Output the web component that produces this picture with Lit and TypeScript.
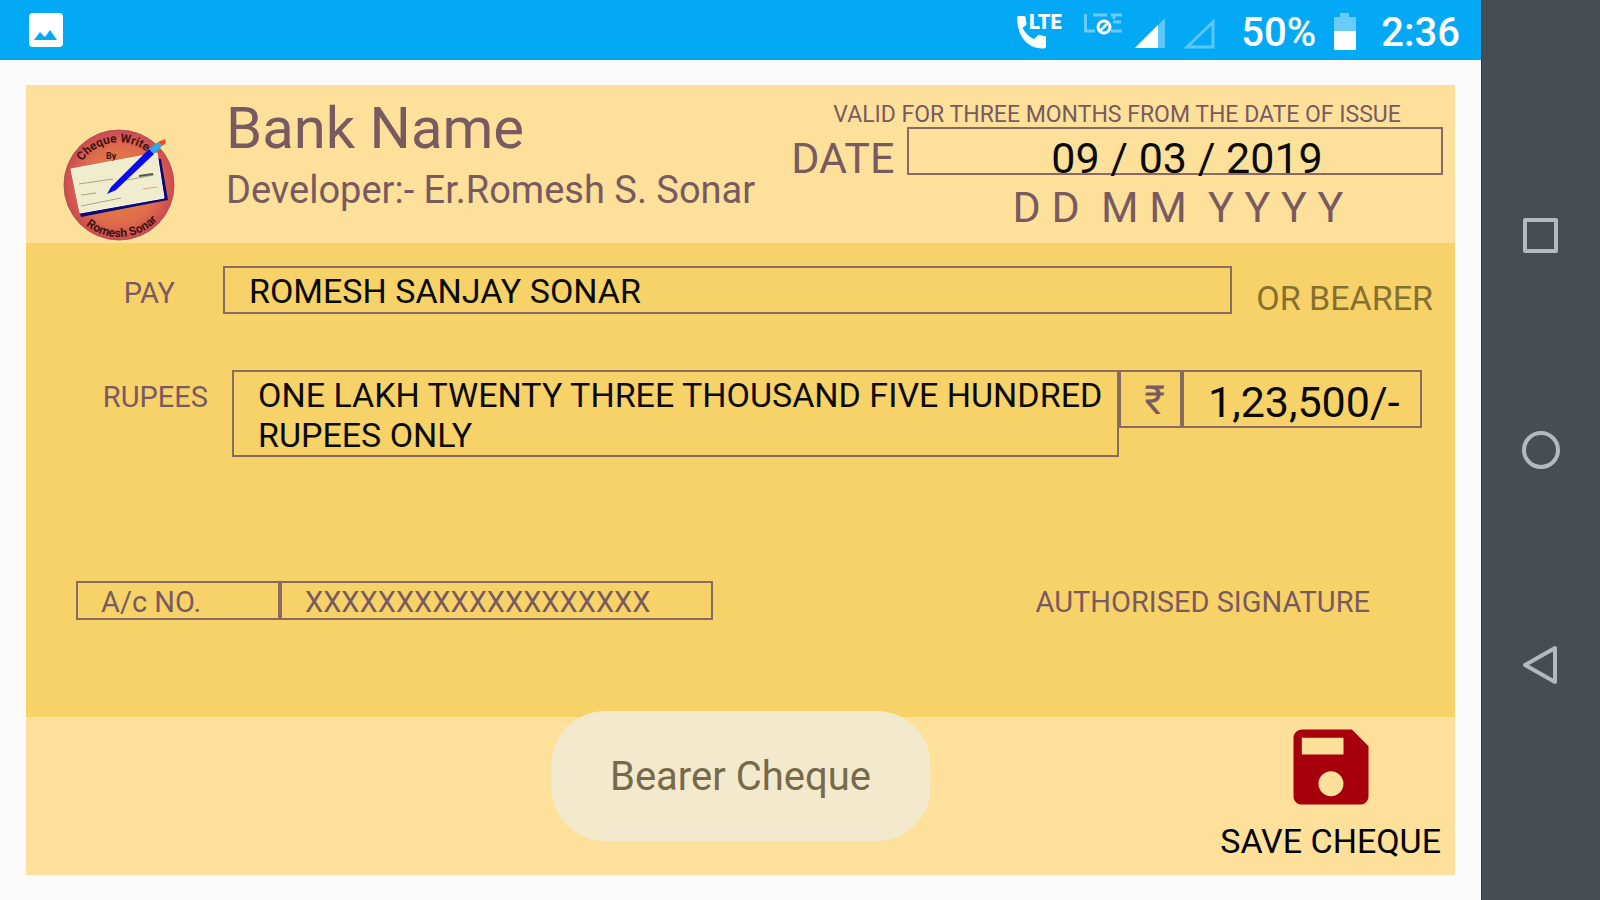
import { LitElement, html, css } from "lit";
import { customElement, property } from "lit/decorators.js";

@customElement("status-bar")
class StatusBar extends LitElement {
  static styles = css`
    :host {
      display: flex;
      align-items: center;
      height: 60px;
      padding: 0 21px 0 28px;
      background: #03a9f4;
      color: #fff;
      font: 500 40px/56px Roboto, sans-serif;
    }
    svg {
      display: block;
      flex: none;
    }
    span,
    time {
      padding-top: 5px;
    }
    .gallery {
      margin-right: auto;
    }
    .call {
      margin-right: 21px;
    }
    .lte {
      margin-right: 12px;
    }
    .signal {
      margin-right: 17px;
    }
    .signal-empty {
      margin-right: 26px;
    }
    .battery {
      margin: 0 24px 0 17px;
    }
  `;

  render() {
    return html`
      <svg class="gallery" width="36" height="36" viewBox="0 0 36 36">
        <rect x="1" y="1" width="34" height="34" rx="4" fill="#fff" />
        <path d="M6 28 12 20l5 5 5-7 7 10z" fill="#03a9f4" />
      </svg>
      <svg class="call" width="46" height="40" viewBox="0 0 46 40" fill="#fff">
        <path
          d="M1 7.500Q1 6 2.500 6H8q1.500 0 1.600 1.500.2 3 1 5.500 .3 1.200-.6 2L6.500 18q4 7.500 11.500 11.300l4-4q.8-.8 2-.4 2.500.9 4.500 1 1.500.1 1.500 1.600V36q0 2.500-2.500 2.500Q10 38.500 3.500 22 1 15 1 7.500z"
        />
        <text x="13" y="19" font-family="Roboto, sans-serif" font-weight="900" font-size="20">LTE</text>
      </svg>
      <svg class="lte" width="40" height="40" viewBox="0 0 40 40">
        <g fill="none" stroke="#6bcbf8" stroke-width="3">
          <path d="M2.500 4v17H12M10 5h14M28 5h11M30 12h8M28 21h11M31 5v4" />
        </g>
        <circle cx="21" cy="17" r="6" fill="none" stroke="#fff" stroke-width="3" />
        <path d="m17 21 8-8" stroke="#fff" stroke-width="2.500" />
      </svg>
      <svg class="signal" width="31" height="40" viewBox="0 0 31 40">
        <path d="M30 8v30H0z" fill="#5cc6f8" />
        <path d="M23 15v23H0z" fill="#fff" />
      </svg>
      <svg class="signal-empty" width="32" height="40" viewBox="0 0 32 40">
        <path d="M30 12v25H4z" fill="none" stroke="#5cc6f8" stroke-width="3" />
      </svg>
      <span>50%</span>
      <svg class="battery" width="24" height="40" viewBox="0 0 24 40">
        <path d="M7 3h9v4h6q1 0 1 1v13H1V8q0-1 1-1h5z" fill="#6bcbf8" />
        <path d="M1 21h22v18q0 1-1 1H2q-1 0-1-1z" fill="#fff" />
      </svg>
      <time>2:36</time>
    `;
  }
}

@customElement("nav-rail")
class NavRail extends LitElement {
  static styles = css`
    :host {
      display: flex;
      flex-direction: column;
      justify-content: center;
      background: #464d53;
      border-left: 1px solid #343b41;
    }
    button {
      display: grid;
      place-items: center;
      height: 215px;
      padding: 0;
      border: 0;
      background: none;
    }
    svg {
      display: block;
      fill: none;
      stroke: #b4b9bb;
      stroke-width: 4;
      stroke-linejoin: round;
    }
  `;

  render() {
    return html`
      <button aria-label="Recent apps">
        <svg width="40" height="40" viewBox="0 0 40 40"><rect x="4" y="5" width="31" height="31" /></svg>
      </button>
      <button aria-label="Home">
        <svg width="40" height="40" viewBox="0 0 40 40"><circle cx="20" cy="20" r="17" /></svg>
      </button>
      <button aria-label="Back">
        <svg width="40" height="40" viewBox="0 0 40 40"><path d="M34 3v34L4 20z" /></svg>
      </button>
    `;
  }
}

@customElement("app-logo")
class AppLogo extends LitElement {
  static styles = css`
    :host {
      display: block;
    }
    svg {
      display: block;
    }
  `;

  render() {
    return html`
      <svg width="112" height="112" viewBox="0 0 112 112" role="img" aria-label="Cheque Writer">
        <defs>
          <radialGradient id="disc">
            <stop offset="0" stop-color="#e88838" />
            <stop offset="0.7" stop-color="#de6c4c" />
            <stop offset="1" stop-color="#cf4a50" />
          </radialGradient>
          <path id="top" d="M13 45A45 45 0 0 1 99 45" />
          <path id="bottom" d="M8 76A52 52 0 0 0 104 76" />
        </defs>
        <circle cx="56" cy="56" r="55" fill="url(#disc)" stroke="#a4565a" stroke-width="1" />
        <g fill="#3c1414" font-family="Roboto, sans-serif" font-weight="700" font-size="12">
          <text text-anchor="middle"><textPath href="#top" startOffset="46%">Cheque Writer</textPath></text>
          <text x="43" y="30" font-size="9">By</text>
          <text text-anchor="middle"><textPath href="#bottom" startOffset="53%">Romesh Sonar</textPath></text>
        </g>
        <path d="M98 30 105 71 18 88 16 82 97 70 90 28z" fill="#0b0b78" />
        <path d="M8 40 94 24 101 69 17 84z" fill="#f0edcf" stroke="#fffef0" stroke-width="1" />
        <path d="M16 55l34-5M18 66l15-2M18 77l40-8M64 51l27-5" stroke="#a5a68c" stroke-width="1" />
        <path d="M76 47l14-2" stroke="#55564a" stroke-width="2" />
        <path d="M80 60l14-2" stroke="#dca08c" stroke-width="1" />
        <path d="M44 65 48 58 86 20 91 25 53 61z" fill="#0a0af0" />
        <path d="M86 20 95 13 99 17 91 25z" fill="#2aa8f4" />
        <path d="M95 13 102 10 103 14 99 17z" fill="#e85020" />
      </svg>
    `;
  }
}

@customElement("cheque-form")
class ChequeForm extends LitElement {
  static styles = css`
    :host {
      display: grid;
      grid-template-rows: 1fr 3fr 1fr;
      color: #785a60;
      background: #fde19b;
    }
    * {
      box-sizing: border-box;
    }
    input,
    textarea {
      display: block;
      min-width: 0;
      width: 100%;
      margin: 0;
      border: 0;
      padding: 0;
      border-radius: 0;
      background: none;
      color: inherit;
      font: inherit;
      outline: none;
      resize: none;
      overflow: hidden;
    }
    .box {
      border: 2px solid #8a6a64;
    }
    .ink {
      color: #0a0a05;
    }
    .header {
      display: grid;
      grid-template-columns: 200px 1fr 46%;
      padding-right: 12px;
    }
    .logo {
      margin: 44px 0 0 37px;
    }
    .names {
      padding-top: 8px;
      white-space: nowrap;
    }
    .bank {
      margin: 0;
      font-size: 58px;
      font-weight: 400;
      line-height: 70px;
    }
    .developer {
      margin: 5px 0 0;
      font-size: 38px;
      line-height: 44px;
    }
    .date {
      display: grid;
      grid-template-columns: 1fr 536px;
      align-content: start;
      padding-top: 15px;
      font-size: 43px;
      white-space: nowrap;
    }
    .valid {
      grid-column: 1 / 3;
      height: 27px;
      text-align: center;
      font-size: 23px;
      line-height: 30px;
    }
    .date-label {
      height: 48px;
      line-height: 62px;
    }
    .date-box {
      height: 48px;
      padding-left: 24px;
    }
    .date-box input {
      height: 58px;
      text-align: center;
    }
    .format {
      grid-column: 2;
      padding: 8px 0 0 6px;
      line-height: 48px;
      text-align: center;
      white-space: pre;
    }
    .body {
      display: flex;
      flex-direction: column;
      background: #f7d269;
      padding-top: 23px;
    }
    .row {
      display: flex;
      align-items: flex-start;
      white-space: nowrap;
    }
    .row-label {
      font-size: 29px;
      line-height: 54px;
      text-align: right;
    }
    .pay-row {
      padding-right: 22px;
      font-size: 34px;
    }
    .pay-label {
      width: 197px;
      padding-right: 48px;
    }
    .pay-box {
      flex: 1;
      height: 48px;
      padding: 2px 0 0 24px;
    }
    .pay-box input {
      height: 42px;
    }
    .bearer {
      margin-left: 24px;
      line-height: 64px;
      color: #86702f;
    }
    .rupees-row {
      margin-top: 40px;
      padding-right: 33px;
    }
    .rupees-label {
      width: 206px;
      padding-right: 24px;
    }
    .words-box {
      flex: 1;
      padding: 3px 0 0 24px;
      font-size: 34px;
      line-height: 40px;
    }
    .words-box textarea {
      height: 80px;
    }
    .symbol,
    .amount {
      height: 58px;
      font-size: 43px;
      line-height: 58px;
    }
    .symbol {
      width: 63px;
      padding-left: 8px;
      font-size: 40px;
      text-align: center;
    }
    .amount {
      width: 240px;
      padding-left: 24px;
    }
    .amount input {
      height: 60px;
    }
    .account-row {
      margin-top: auto;
      padding: 0 85px 97px 50px;
      font-size: 29px;
      line-height: 38px;
    }
    .account-label,
    .account-box {
      height: 39px;
      padding-left: 23px;
    }
    .account-label {
      width: 204px;
    }
    .account-box {
      width: 433px;
    }
    .account-box input {
      height: 38px;
    }
    .signature {
      height: 39px;
      margin-left: auto;
      line-height: 43px;
    }
    .footer {
      display: flex;
      justify-content: flex-end;
      align-items: flex-start;
      padding-right: 14px;
    }
    .save {
      display: flex;
      flex-direction: column;
      align-items: center;
      padding: 0;
      border: 0;
      background: none;
      font: 34px/40px Roboto, sans-serif;
      cursor: pointer;
    }
    .save svg {
      display: block;
      margin-bottom: 4px;
    }
  `;

  render() {
    return html`
      <header class="header">
        <app-logo class="logo"></app-logo>
        <div class="names">
          <h1 class="bank">Bank Name</h1>
          <p class="developer">Developer:- Er.Romesh S. Sonar</p>
        </div>
        <div class="date">
          <span class="valid">VALID FOR THREE MONTHS FROM THE DATE OF ISSUE</span>
          <label class="date-label" for="date">DATE</label>
          <div class="box date-box ink"><input id="date" .value=${"09 / 03 / 2019"} /></div>
          <span class="format">D D  M M  Y Y Y Y</span>
        </div>
      </header>
      <section class="body">
        <div class="row pay-row">
          <label class="row-label pay-label" for="pay">PAY</label>
          <div class="box pay-box ink"><input id="pay" .value=${"ROMESH SANJAY SONAR"} /></div>
          <span class="bearer">OR BEARER</span>
        </div>
        <div class="row rupees-row">
          <label class="row-label rupees-label" for="words">RUPEES</label>
          <div class="box words-box ink">
            <textarea
              id="words"
              .value=${"ONE LAKH TWENTY THREE THOUSAND FIVE HUNDRED RUPEES ONLY"}
            ></textarea>
          </div>
          <label class="box symbol" for="amount">₹</label>
          <div class="box amount ink"><input id="amount" .value=${"1,23,500/-"} /></div>
        </div>
        <div class="row account-row">
          <label class="box account-label" for="account">A/c NO.</label>
          <div class="box account-box"><input id="account" .value=${"X".repeat(19)} /></div>
          <span class="signature">AUTHORISED SIGNATURE</span>
        </div>
      </section>
      <footer class="footer">
        <button class="save">
          <svg width="100" height="100" viewBox="0 0 24 24" fill="#a6000c">
            <path
              d="M17 3H5c-1.110 0-2 .9-2 2v14c0 1.100.89 2 2 2h14c1.100 0 2-.9 2-2V7l-4-4zm-5 16c-1.660 0-3-1.340-3-3s1.340-3 3-3 3 1.340 3 3-1.340 3-3 3zm3-10H5V5h10v4z"
            />
          </svg>
          SAVE CHEQUE
        </button>
      </footer>
    `;
  }
}

@customElement("toast-message")
class ToastMessage extends LitElement {
  static styles = css`
    :host {
      display: block;
      padding: 2px 59px 0;
      border-radius: 54px;
      background: rgba(242, 234, 208, 0.93);
      color: #766a4b;
      font: 40px/128px Roboto, sans-serif;
      white-space: nowrap;
    }
  `;

  @property() message = "";

  render() {
    return html`<span role="status">${this.message}</span>`;
  }
}

@customElement("app-root")
class AppRoot extends LitElement {
  static styles = css`
    :host {
      display: grid;
      grid-template-columns: 1fr 119px;
      min-height: 100vh;
      font-family: Roboto, sans-serif;
      background: #fafafa;
    }
    .screen {
      position: relative;
      display: flex;
      flex-direction: column;
      min-width: 0;
    }
    .cheque {
      flex: 1;
      margin: 25px 26px;
    }
    .toast {
      position: absolute;
      bottom: 59px;
      left: 50%;
      transform: translateX(-50%);
    }
  `;

  render() {
    return html`
      <main class="screen">
        <status-bar></status-bar>
        <cheque-form class="cheque"></cheque-form>
        <toast-message class="toast" message="Bearer Cheque"></toast-message>
      </main>
      <nav-rail></nav-rail>
    `;
  }
}
